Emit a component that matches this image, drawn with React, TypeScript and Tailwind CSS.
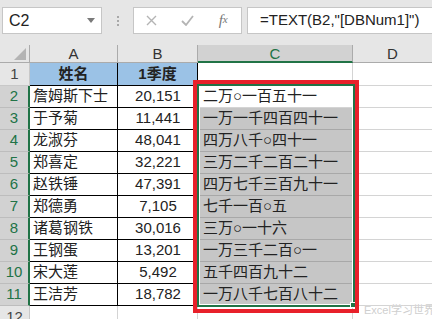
import React from "react";

const rows = [
  { name: "詹姆斯下士", q1: "20,151", cn: "二万○一百五十一" },
  { name: "于予菊", q1: "11,441", cn: "一万一千四百四十一" },
  { name: "龙淑芬", q1: "48,041", cn: "四万八千○四十一" },
  { name: "郑喜定", q1: "32,221", cn: "三万二千二百二十一" },
  { name: "赵铁锤", q1: "47,391", cn: "四万七千三百九十一" },
  { name: "郑德勇", q1: "7,105", cn: "七千一百○五" },
  { name: "诸葛钢铁", q1: "30,016", cn: "三万○一十六" },
  { name: "王钢蛋", q1: "13,201", cn: "一万三千二百○一" },
  { name: "宋大莲", q1: "5,492", cn: "五千四百九十二" },
  { name: "王洁芳", q1: "18,782", cn: "一万八千七百八十二" },
];

const font = "font-['Liberation_Sans','Noto_Sans_CJK_SC',sans-serif]";

const App: React.FC = () => {
  return (
    <div
      className={`relative w-[432px] h-[319px] overflow-hidden bg-[#e6e6e6] text-[#222] ${font}`}
    >
      {/* formula bar */}
      <div className="flex h-[45px] items-start pl-[2px] pt-[7px]">
        <div className="flex h-[27px] w-[100px] items-center justify-between border border-[#c6c6c6] bg-white pl-[6px] pr-[6px] text-[16px]">
          <span>C2</span>
          <svg width="8" height="5" viewBox="0 0 8 5">
            <path d="M0 0 L8 0 L4 5 Z" fill="#7a7a7a" />
          </svg>
        </div>
        <div className="flex h-[27px] w-[31px] items-center justify-center">
          <div className="flex flex-col gap-[2px]">
            <span className="h-[2px] w-[2px] bg-[#a8a8a8]" />
            <span className="h-[2px] w-[2px] bg-[#a8a8a8]" />
            <span className="h-[2px] w-[2px] bg-[#a8a8a8]" />
          </div>
        </div>
        <div className="flex h-[27px] w-[109px] items-center border border-[#c6c6c6] bg-white">
          <div className="flex w-[36px] justify-center">
            <svg width="11" height="11" viewBox="0 0 11 11">
              <path d="M1 1 L10 10 M10 1 L1 10" stroke="#b4b4b4" strokeWidth="1.4" />
            </svg>
          </div>
          <div className="flex w-[36px] justify-center">
            <svg width="13" height="11" viewBox="0 0 13 11">
              <path d="M1 6 L5 10 L12 1" stroke="#b4b4b4" strokeWidth="1.8" fill="none" />
            </svg>
          </div>
          <div className="flex w-[36px] justify-center font-['Liberation_Serif',serif] text-[15px] italic text-[#777]">
            <span>f</span>
            <span className="text-[11px] leading-[20px]">x</span>
          </div>
        </div>
        <div className="ml-[5px] flex h-[27px] flex-1 items-center border border-r-0 border-[#c6c6c6] bg-white pl-[12px] text-[15px]">
          =TEXT(B2,"[DBNum1]")
        </div>
      </div>

      {/* column headers */}
      <div className="flex h-[18px] text-[15px] leading-none">
        <div className="flex w-[30px] items-end justify-end border-r border-b border-[#ababab] pb-[2px] pr-[3px]">
          <svg width="12" height="12" viewBox="0 0 12 12">
            <path d="M12 0 L12 12 L0 12 Z" fill="#b4b4b4" />
          </svg>
        </div>
        <div className="flex w-[88px] items-center justify-center border-r border-b border-[#ababab] text-[#333]">
          A
        </div>
        <div className="flex w-[80px] items-center justify-center border-r border-b border-[#ababab] text-[#333]">
          B
        </div>
        <div className="flex w-[155px] items-center justify-center border-r border-b-2 border-r-[#ababab] border-b-[#217346] bg-[#d2d2d2] text-[#217346]">
          C
        </div>
        <div className="flex flex-1 items-center justify-center border-b border-[#ababab] text-[#333]">
          D
        </div>
      </div>

      {/* row 1 */}
      <div className="flex h-[23px] text-[15px]">
        <div className="flex w-[30px] items-center justify-center border-r border-b border-[#c8c8c8] text-[#444]">
          1
        </div>
        <div className="flex w-[88px] items-center justify-center border-r border-b border-black bg-[#9bc2e6] font-bold">
          姓名
        </div>
        <div className="flex w-[80px] items-center justify-center border-r border-b border-black bg-[#9bc2e6] font-bold">
          1季度
        </div>
        <div className="w-[155px] border-r border-b border-[#d4d4d4] bg-white" />
        <div className="flex-1 border-b border-[#d4d4d4] bg-white" />
      </div>

      {/* data rows */}
      {rows.map((r, i) => (
        <div key={r.name} className="flex h-[22px] text-[15px]">
          <div className="flex w-[30px] items-center justify-center border-r-2 border-b border-r-[#217346] border-b-[#bdbdbd] bg-[#d2d2d2] text-[#217346]">
            {i + 2}
          </div>
          <div className="flex w-[88px] items-center border-r border-b border-black bg-white pl-[3px] whitespace-nowrap">
            {r.name}
          </div>
          <div className="flex w-[80px] items-center justify-center border-r border-b border-black bg-white pl-[1px]">
            {r.q1}
          </div>
          <div
            className={`flex w-[155px] items-center border-r border-b pl-[5px] whitespace-nowrap ${
              i === 0
                ? "border-[#d4d4d4] bg-white"
                : "border-[#a8a8a8] bg-[#c6c6c6]"
            }`}
          >
            {r.cn}
          </div>
          <div className="flex-1 border-b border-[#d4d4d4] bg-white" />
        </div>
      ))}

      {/* row 12 */}
      <div className="flex h-[22px] text-[15px]">
        <div className="flex w-[30px] items-center justify-center border-r border-[#c8c8c8] text-[#444]">
          12
        </div>
        <div className="w-[88px] border-r border-[#d4d4d4] bg-white" />
        <div className="w-[80px] border-r border-[#d4d4d4] bg-white" />
        <div className="w-[155px] border-r border-[#d4d4d4] bg-white" />
        <div className="flex-1 bg-white" />
      </div>

      {/* selection outline */}
      <div className="absolute left-[197px] top-[84px] h-[223px] w-[158px] border-2 border-[#217346]">
        <div className="h-full w-full border border-white" />
      </div>
      <div className="absolute left-[350px] top-[302px] h-[6px] w-[6px] border border-white bg-[#217346]" />

      {/* red highlight box */}
      <div className="absolute left-[193px] top-[80px] h-[233px] w-[166px] border-4 border-[#e8202a]" />

      {/* watermark */}
      <div className="absolute left-[364px] top-[302px] whitespace-nowrap text-[11px] text-[#cfcfcf] [text-shadow:0_0_1px_#fff]">
        Excel学习世界
      </div>
    </div>
  );
};

export default App;
